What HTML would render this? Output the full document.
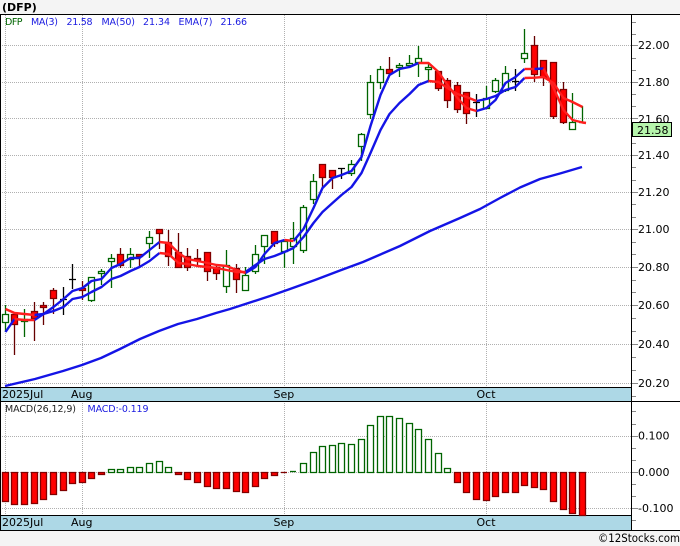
<!DOCTYPE html>
<html><head><meta charset="utf-8"><style>
html,body{margin:0;padding:0;background:#f4f4f4;width:680px;height:546px;overflow:hidden}
svg{display:block;font-family:"DejaVu Sans","Liberation Sans",sans-serif}
</style></head><body>
<svg width="680" height="546" viewBox="0 0 680 546" xmlns="http://www.w3.org/2000/svg">
<rect width="680" height="546" fill="#f4f4f4"/>
<rect y="14" width="680" height="516" fill="#fff"/>
<text x="2" y="11" font-size="11" font-weight="bold" fill="#000">(DFP)</text>
<g shape-rendering="crispEdges" fill="none">
<path stroke="#b0b0b0" stroke-dasharray="1 1" d="M0 45.5H632M0 82.5H632M0 118.5H632M0 155.5H632M0 192.5H632M0 229.5H632M0 267.5H632M0 305.5H632M0 344.5H632M0 383.5H632M0 436.5H632M0 472.5H632M0 508.5H632"/>
<path stroke="#b0b0b0" stroke-dasharray="1 1" d="M5.5 15V388M82.5 15V388M284.5 15V388M486.5 15V388M5.5 401V515M82.5 401V515M284.5 401V515M486.5 401V515"/>
<rect x="0" y="388" width="632" height="13" fill="#add8e6"/>
<rect x="0" y="516" width="632" height="14" fill="#add8e6"/>
<path stroke="#888" d="M632 22.5h4M632 34.5h4M632 45.5h6M632 58.5h4M632 70.5h4M632 82.5h6M632 94.5h4M632 106.5h4M632 118.5h6M632 130.5h4M632 143.5h4M632 155.5h6M632 167.5h4M632 180.5h4M632 192.5h6M632 204.5h4M632 217.5h4M632 229.5h6M632 242.5h4M632 254.5h4M632 267.5h6M632 280.5h4M632 292.5h4M632 305.5h6M632 318.5h4M632 331.5h4M632 344.5h6M632 357.5h4M632 370.5h4M632 383.5h6M632 396.5h4M632 411.5h4M632 424.5h4M632 436.5h6M632 448.5h4M632 460.5h4M632 472.5h6M632 484.5h4M632 496.5h4M632 508.5h6M632 520.5h4"/>
<path stroke="#000" d="M0 14.5H680M0 401.5H680M0 530.5H680M0 387.5H632M0 515.5H632M631.5 14V530M0.5 14V530"/>
</g>
<g fill="none" stroke-width="1.3">
<!-- wicks -->
<path stroke="#006400" d="M5.5 305V332M24.5 309V337M91.5 277V302M101.5 269V285M111.5 254V288M130.5 248V268M149.5 231V258M226.5 250V293M245.5 267V290M255.5 245V274M264.5 235V264M284.5 241V268M293.5 222V264M303.5 205V253M313.5 174V204M351.5 160V176M361.5 133V161M370.5 75V119M380.5 66V89M399.5 63V77M409.5 55V67M418.5 46V77M428.5 63V82M486.5 86V109M495.5 78V93M505.5 66V92M524.5 29V63M572.5 93V129M582.5 106V123"/>
<path stroke="#660000" d="M14.5 314V355M34.5 302V341M43.5 302V325M53.5 288V314M82.5 281V300M120.5 248V268M139.5 254V267M159.5 229V249M168.5 230V266M178.5 233V268M187.5 248V271M197.5 249V267M207.5 252V281M216.5 264V280M236.5 264V293M274.5 231V247M322.5 164V188M332.5 170V189M389.5 57V73M438.5 71V91M447.5 78V108M457.5 82V113M466.5 92V124M534.5 36V82M543.5 60V86M553.5 62V119M563.5 82V124"/>
<path stroke="#000" d="M63.5 287V315M72.5 264V289M341.5 168V179M476.5 94V117M515.5 69V91M60 299.5h7M69 279.5h7M338 168.5h7M473 102.5h7M512 81.5h7"/>
<path stroke="#006400" d="M579 122.5h7"/>
<!-- green bodies -->
<path stroke="#006400" fill="#fff" d="M2.5 314.5h6v8h-6zM21.5 319.5h6v2h-6zM88.5 277.5h6v23h-6zM98.5 271.5h6v2h-6zM108.5 258.5h6v3h-6zM127.5 254.5h6v5h-6zM146.5 237.5h6v6h-6zM223.5 265.5h6v21h-6zM242.5 275.5h6v15h-6zM252.5 254.5h6v17h-6zM261.5 235.5h6v11h-6zM281.5 241.5h6v10h-6zM290.5 238.5h6v8h-6zM300.5 207.5h6v43h-6zM310.5 181.5h6v18h-6zM348.5 164.5h6v9h-6zM358.5 134.5h6v12h-6zM367.5 82.5h6v32h-6zM377.5 69.5h6v13h-6zM396.5 65.5h6v2h-6zM406.5 63.5h6v2h-6zM415.5 58.5h6v4h-6zM425.5 67.5h6v2h-6zM483.5 98.5h6v10h-6zM492.5 80.5h6v11h-6zM502.5 73.5h6v17h-6zM521.5 53.5h6v5h-6zM569.5 122.5h6v7h-6z"/>
<!-- red bodies -->
<path stroke="#800000" fill="#f00" d="M11.5 314.5h6v10h-6zM31.5 311.5h6v7h-6zM40.5 305.5h6v2h-6zM50.5 290.5h6v8h-6zM79.5 288.5h6v2h-6zM117.5 254.5h6v11h-6zM136.5 254.5h6v2h-6zM156.5 229.5h6v4h-6zM165.5 242.5h6v14h-6zM175.5 252.5h6v15h-6zM184.5 256.5h6v11h-6zM194.5 258.5h6v2h-6zM204.5 252.5h6v19h-6zM213.5 267.5h6v6h-6zM233.5 268.5h6v11h-6zM271.5 231.5h6v12h-6zM319.5 164.5h6v13h-6zM329.5 170.5h6v7h-6zM386.5 69.5h6v4h-6zM435.5 71.5h6v17h-6zM444.5 80.5h6v20h-6zM454.5 85.5h6v24h-6zM463.5 92.5h6v21h-6zM531.5 45.5h6v29h-6zM540.5 60.5h6v17h-6zM550.5 62.5h6v54h-6zM560.5 89.5h6v33h-6z"/>
<!-- MACD -->
<path stroke="#006400" fill="#fff" d="M108.5 469.5h6v3h-6zM117.5 469.5h6v3h-6zM127.5 467.5h6v5h-6zM136.5 467.5h6v5h-6zM146.5 463.5h6v9h-6zM156.5 461.5h6v11h-6zM165.5 467.5h6v5h-6zM300.5 463.5h6v9h-6zM310.5 452.5h6v20h-6zM319.5 446.5h6v26h-6zM329.5 445.5h6v27h-6zM338.5 443.5h6v29h-6zM348.5 444.5h6v28h-6zM358.5 439.5h6v33h-6zM367.5 425.5h6v47h-6zM377.5 416.5h6v56h-6zM386.5 416.5h6v56h-6zM396.5 418.5h6v54h-6zM406.5 423.5h6v49h-6zM415.5 429.5h6v43h-6zM425.5 439.5h6v33h-6zM435.5 453.5h6v19h-6zM444.5 468.5h6v4h-6z"/>
<path stroke="#006400" d="M290 471.5h6"/>
<path stroke="#800000" d="M281 472.5h6"/>
<path stroke="#800000" fill="#f00" d="M2.5 472.5h6v29h-6zM11.5 472.5h6v32h-6zM21.5 472.5h6v32h-6zM31.5 472.5h6v31h-6zM40.5 472.5h6v27h-6zM50.5 472.5h6v22h-6zM60.5 472.5h6v18h-6zM69.5 472.5h6v11h-6zM79.5 472.5h6v10h-6zM88.5 472.5h6v6h-6zM98.5 472.5h6v2h-6zM175.5 472.5h6v2h-6zM184.5 472.5h6v7h-6zM194.5 472.5h6v10h-6zM204.5 472.5h6v14h-6zM213.5 472.5h6v16h-6zM223.5 472.5h6v16h-6zM233.5 472.5h6v19h-6zM242.5 472.5h6v20h-6zM252.5 472.5h6v14h-6zM261.5 472.5h6v6h-6zM271.5 472.5h6v3h-6zM454.5 472.5h6v10h-6zM463.5 472.5h6v20h-6zM473.5 472.5h6v27h-6zM483.5 472.5h6v28h-6zM492.5 472.5h6v24h-6zM502.5 472.5h6v20h-6zM512.5 472.5h6v20h-6zM521.5 472.5h6v13h-6zM531.5 472.5h6v15h-6zM540.5 472.5h6v17h-6zM550.5 472.5h6v29h-6zM560.5 472.5h6v37h-6zM569.5 472.5h6v41h-6zM579.5 472.5h6v43h-6z"/>
</g>
<!-- MA lines -->
<g fill="none" stroke-width="2.4" stroke-linejoin="round">
<polyline stroke="#1414e6" points="5,386 35,379 63,371 82,365 101,358 120,349 140,339 159,331 178,324 197,319 216,313 230,309 270,296 290,289 315,280 340,270.5 363,262 400,246 430,231 460,218 480,209 500,198 520,187.5 540,179 560,173.5 582,167"/>
<polyline stroke="#1414e6" points="34.5,315 43.5,314 53.5,311 63.5,307 72.5,299 82.5,297 91.5,292 101.5,287 111.5,279 120.5,276 130.5,271 139.5,267 149.5,261 159.5,253"/>
<polyline stroke="#1414e6" points="245.5,272 255.5,265 264.5,259 274.5,256 284.5,252 293.5,248 303.5,237 313.5,223 322.5,212 332.5,203 341.5,195 351.5,187 361.5,173 370.5,153 380.5,130 389.5,114 399.5,103 409.5,94 418.5,85 428.5,81"/>
<polyline stroke="#1414e6" points="476.5,101 486.5,99 495.5,96 505.5,90 515.5,87 524.5,78"/>
<polyline stroke="#1414e6" points="5.5,332 14.5,319"/>
<polyline stroke="#1414e6" points="34.5,320 43.5,314 53.5,307 63.5,299 72.5,291 82.5,288 91.5,281 101.5,279 111.5,268 120.5,264 130.5,258 139.5,258 149.5,250 159.5,242"/>
<polyline stroke="#1414e6" points="245.5,273 255.5,267 264.5,254 274.5,243 284.5,240"/>
<polyline stroke="#1414e6" points="293.5,241 303.5,229 313.5,208 322.5,188 332.5,178 341.5,175 351.5,171 361.5,157 370.5,126 380.5,95 389.5,75 399.5,69 409.5,67 418.5,63"/>
<polyline stroke="#1414e6" points="476.5,111 486.5,108 495.5,100 505.5,83 515.5,77 524.5,69"/>
<polyline stroke="#1414e6" points="534.5,69 543.5,68.5"/>
<polyline stroke="#ff1e1e" points="5.5,309 14.5,313 24.5,314 34.5,315"/>
<polyline stroke="#ff1e1e" points="159.5,253 168.5,254 178.5,263 187.5,264 197.5,266 207.5,267 216.5,268 226.5,270 236.5,272 245.5,272"/>
<polyline stroke="#ff1e1e" points="428.5,81 438.5,82 447.5,88 457.5,94 466.5,97 476.5,101"/>
<polyline stroke="#ff1e1e" points="524.5,78 534.5,77.7 543.5,77 553.5,83 563.5,98 572.5,102 582.5,107"/>
<polyline stroke="#ff1e1e" points="14.5,319 24.5,320 34.5,320"/>
<polyline stroke="#ff1e1e" points="159.5,242 168.5,243 178.5,253 187.5,259 197.5,261 207.5,263 216.5,265 226.5,266 236.5,270 245.5,273"/>
<polyline stroke="#ff1e1e" points="284.5,240 293.5,241"/>
<polyline stroke="#ff1e1e" points="418.5,63 428.5,63 438.5,72 447.5,85 457.5,98 466.5,108 476.5,111"/>
<polyline stroke="#ff1e1e" points="524.5,69 534.5,69"/>
<polyline stroke="#ff1e1e" points="543.5,68.5 553.5,88 563.5,110 572.5,120 582.5,122.5 586,123"/>
</g>
<!-- legends -->
<g font-size="9.5">
<text x="5" y="25" fill="#006400" textLength="17.5">DFP</text>
<g fill="#1a1ae0">
<text x="31" y="25" textLength="27">MA(3)</text>
<text x="66.5" y="25" textLength="26">21.58</text>
<text x="101.5" y="25" textLength="33.5">MA(50)</text>
<text x="143" y="25" textLength="27">21.34</text>
<text x="178.5" y="25" textLength="34">EMA(7)</text>
<text x="220.5" y="25" textLength="26.5">21.66</text>
<text x="87.5" y="412" textLength="61">MACD:-0.119</text>
</g>
<text x="5" y="412" fill="#222" textLength="71">MACD(26,12,9)</text>
</g>
<!-- axis labels -->
<g font-size="11" fill="#000">
<text x="638" y="49">22.00</text>
<text x="638" y="86">21.80</text>
<text x="638" y="123">21.60</text>
<text x="638" y="159">21.40</text>
<text x="638" y="196">21.20</text>
<text x="638" y="233">21.00</text>
<text x="638" y="271">20.80</text>
<text x="638" y="309">20.60</text>
<text x="638" y="348">20.40</text>
<text x="638" y="387">20.20</text>
<text x="638" y="439.5">0.100</text>
<text x="638" y="476">0.000</text>
<text x="638" y="512">-0.100</text>
<text x="2" y="398">2025Jul</text>
<text x="71" y="398">Aug</text>
<text x="273.5" y="398">Sep</text>
<text x="476.5" y="398">Oct</text>
<text x="2" y="526">2025Jul</text>
<text x="71" y="526">Aug</text>
<text x="273.5" y="526">Sep</text>
<text x="476.5" y="526">Oct</text>
</g>
<rect x="632.5" y="122.5" width="39" height="14" fill="#b6f5ac" stroke="#000" shape-rendering="crispEdges"/>
<text x="637" y="134" font-size="11" fill="#000">21.58</text>
<text x="598" y="542" font-size="11.5" fill="#000" textLength="82" lengthAdjust="spacingAndGlyphs">©12Stocks.com</text>
</svg>
</body></html>
